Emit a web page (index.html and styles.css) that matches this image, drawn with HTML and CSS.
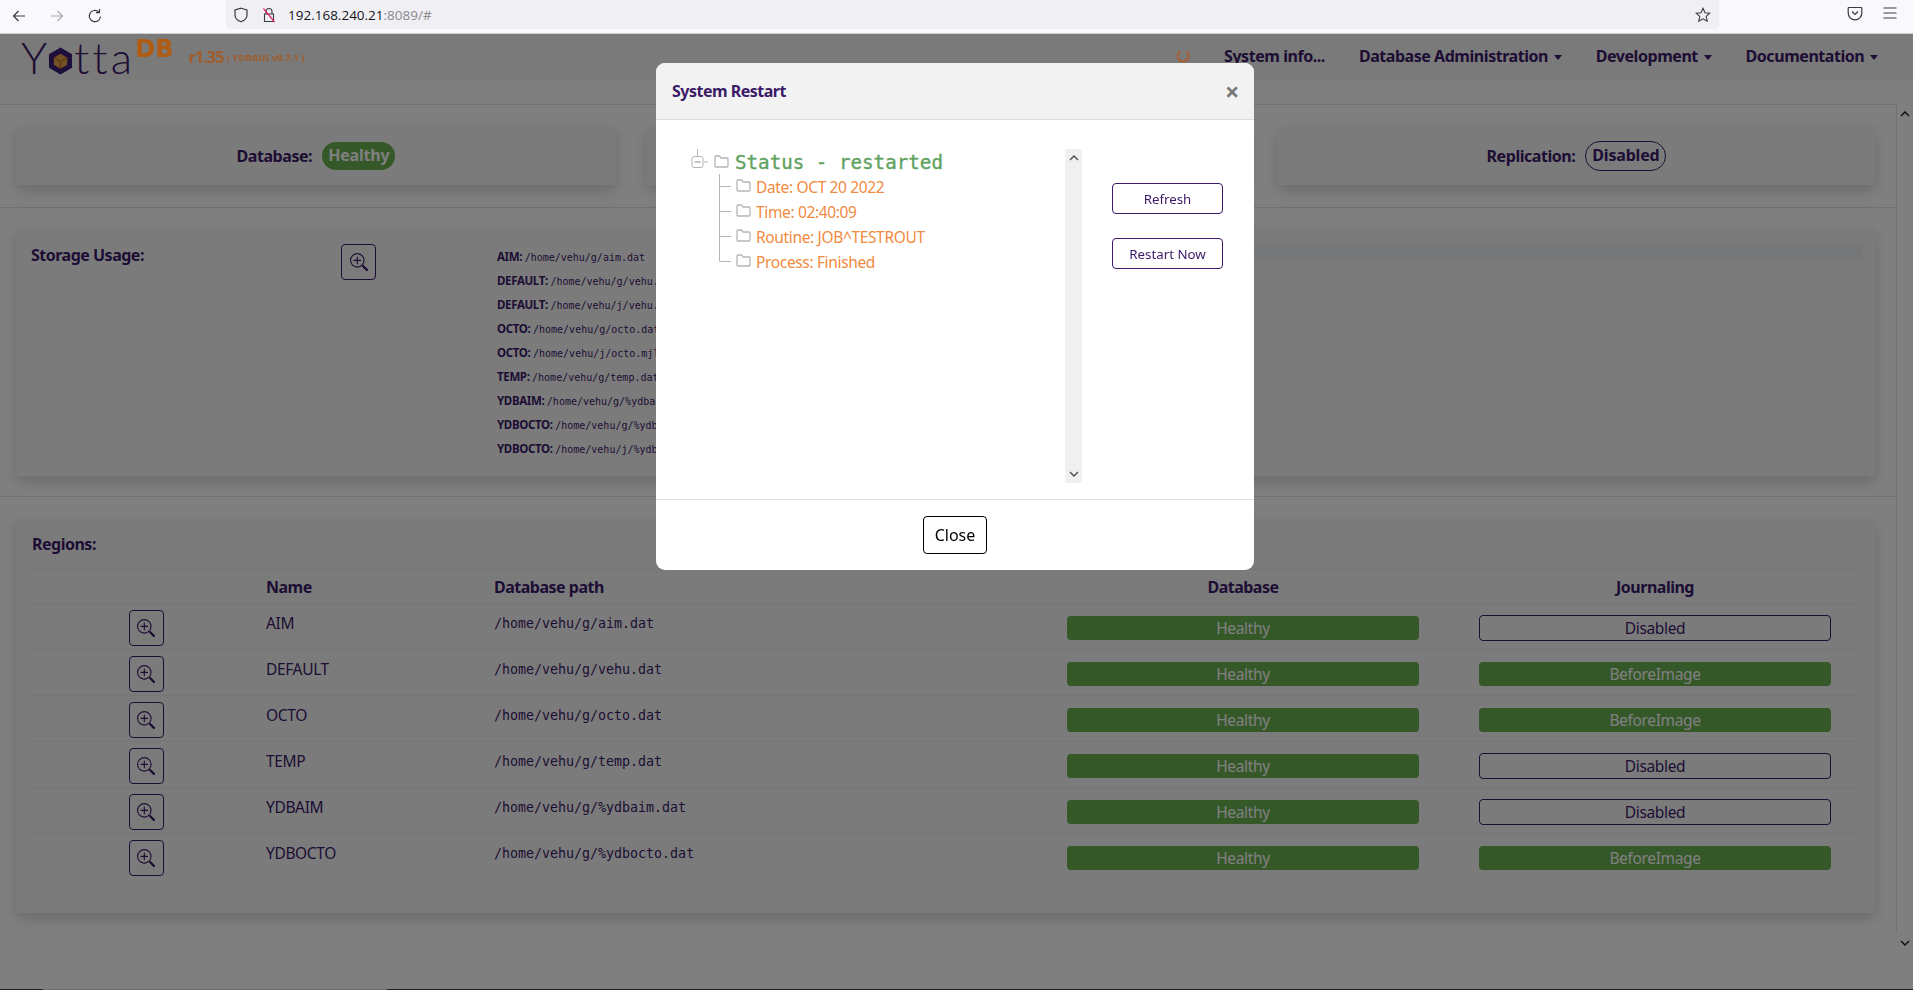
FILE: index.html
```html
<!DOCTYPE html>
<html lang="en">
<head>
<meta charset="utf-8">
<title>YottaDB GUI</title>
<link rel="stylesheet" href="styles.css">
</head>
<body>
<svg class="defs" width="0" height="0" aria-hidden="true">
  <symbol id="zoom" viewBox="0 0 16 16">
    <path fill-rule="evenodd" d="M6.5 12a5.5 5.5 0 1 0 0-11 5.5 5.5 0 0 0 0 11zM13 6.5a6.5 6.5 0 1 1-13 0 6.5 6.5 0 0 1 13 0z"/>
    <path d="M10.344 11.742c.03.04.062.078.098.115l3.85 3.85a1 1 0 0 0 1.415-1.414l-3.85-3.85a1.007 1.007 0 0 0-.115-.1 6.538 6.538 0 0 1-1.398 1.4z"/>
    <path fill-rule="evenodd" d="M6.5 3a.5.5 0 0 1 .5.5V6h2.5a.5.5 0 0 1 0 1H7v2.5a.5.5 0 0 1-1 0V7H3.5a.5.5 0 0 1 0-1H6V3.5a.5.5 0 0 1 .5-.5z"/>
  </symbol>
  <symbol id="folder" viewBox="0 0 15 13">
    <path d="M1 3V2a1 1 0 0 1 1-1h3.6l1.4 2h6a1 1 0 0 1 1 1v7a1 1 0 0 1-1 1H2a1 1 0 0 1-1-1V3z" fill="none" stroke="#b5b5b5" stroke-width="1.3"/>
  </symbol>
</svg>

<header class="chrome">
  <div class="nav-btns">
    <svg class="ci" viewBox="0 0 16 16"><path d="M14 8H2.5M7.5 3l-5 5 5 5" fill="none" stroke="#3a3a44" stroke-width="1.2"/></svg>
    <svg class="ci" viewBox="0 0 16 16"><path d="M2 8h11.5M8.5 3l5 5-5 5" fill="none" stroke="#a9a9ae" stroke-width="1.2"/></svg>
    <svg class="ci" viewBox="0 0 16 16"><path d="M13.5 8.5A5.6 5.6 0 1 1 11.6 3.8M12.5 1v3.6H9" fill="none" stroke="#3a3a44" stroke-width="1.2"/></svg>
  </div>
  <div class="urlbar">
    <svg class="ci shield" viewBox="0 0 16 16"><path d="M8 1.2 14 3v5c0 3.4-2.6 5.6-6 6.8C4.600 13.600 2 11.400 2 8V3z" fill="none" stroke="#3a3a44" stroke-width="1.2"/></svg>
    <svg class="ci lock" viewBox="0 0 16 16"><path d="M5 7V4.500a3 3 0 0 1 6 0V7M3.500 7h9v7.500h-9z" fill="none" stroke="#3a3a44" stroke-width="1.1"/><path d="M2.500 1.500 13.500 15" stroke="#e0245e" stroke-width="1.2"/></svg>
    <span class="url">192.168.240.21<span class="url-dim">:8089/#</span></span>
    <svg class="ci star" viewBox="0 0 16 16"><path d="m8 1.300 2 4.400 4.800.5-3.600 3.200 1 4.800L8 11.800l-4.200 2.400 1-4.800L1.200 6.200 6 5.700z" fill="none" stroke="#3a3a44" stroke-width="1.1"/></svg>
  </div>
  <div class="chrome-right">
    <svg class="ci" viewBox="0 0 16 16"><path d="M2 2.500h12a.8.8 0 0 1 .8.800V8a6.800 6.800 0 0 1-13.600 0V3.300A.8.8 0 0 1 2 2.500z" fill="none" stroke="#3a3a44" stroke-width="1.200"/><path d="m5 6.500 3 3 3-3" fill="none" stroke="#3a3a44" stroke-width="1.200"/></svg>
    <svg class="ci" viewBox="0 0 16 16"><path d="M1.500 3h13M1.500 8h13M1.500 13h13" stroke="#3a3a44" stroke-width="1.200"/></svg>
  </div>
</header>

<nav class="navbar">
  <div class="brand">
    <span class="logo-word">Y</span>
    <svg class="logo-hex" viewBox="0 0 26 28"><path d="M13 0 25 7v14l-12 7-12-7V7z" fill="#3a1f78"/><path d="M13 6.500 20 10.500v7.500L13 22l-7-4v-7.500z" fill="#e8a04a"/><path d="M6 10.500 13 14.500l7-4M13 14.500V22" fill="none" stroke="#a8601a" stroke-width="1"/></svg>
    <span class="logo-word tta">tta</span>
    <span class="logo-db">DB</span>
    <span class="ver">r1.35</span>
    <span class="ver-sub">( YDBGUI v0.7.1 )</span>
  </div>
  <div class="menu">
    <svg class="spin" viewBox="0 0 14 16"><path d="M3 2.500A6 6 0 1 0 10 2.500" fill="none" stroke="#b0592a" stroke-width="1.800"/></svg>
    <a class="menu-item">System info...</a>
    <a class="menu-item">Database Administration <i class="caret"></i></a>
    <a class="menu-item">Development <i class="caret"></i></a>
    <a class="menu-item">Documentation <i class="caret"></i></a>
  </div>
</nav>
<div class="strip"></div>

<div class="content">
  <main class="sections">
    <section class="sec sec-status">
      <div class="card status-card"><b>Database:</b><span class="pill pill-ok">Healthy</span></div>
      <div class="card status-card"></div>
      <div class="card status-card"><b>Replication:</b><span class="pill pill-off">Disabled</span></div>
    </section>
    <section class="sec sec-storage">
      <div class="card storage">
        <div class="st-label">Storage Usage:</div>
        <div class="st-btn"><button class="zbtn"><svg class="zi"><use href="#zoom"/></svg></button></div>
        <ul class="files">
          <li><b>AIM:</b> <code>/home/vehu/g/aim.dat</code></li>
          <li><b>DEFAULT:</b> <code>/home/vehu/g/vehu.dat</code></li>
          <li><b>DEFAULT:</b> <code>/home/vehu/j/vehu.mjl</code></li>
          <li><b>OCTO:</b> <code>/home/vehu/g/octo.dat</code></li>
          <li><b>OCTO:</b> <code>/home/vehu/j/octo.mjl</code></li>
          <li><b>TEMP:</b> <code>/home/vehu/g/temp.dat</code></li>
          <li><b>YDBAIM:</b> <code>/home/vehu/g/%ydbaim.dat</code></li>
          <li><b>YDBOCTO:</b> <code>/home/vehu/g/%ydbocto.dat</code></li>
          <li><b>YDBOCTO:</b> <code>/home/vehu/j/%ydbocto.mjl</code></li>
        </ul>
        <div class="track"></div>
      </div>
    </section>
    <section class="sec sec-regions">
      <div class="card regions">
        <div class="reg-title">Regions:</div>
        <div class="rtable">
          <div class="rrow rhead"><span></span><span class="nm">Name</span><span>Database path</span><span class="ctr">Database</span><span class="ctr">Journaling</span></div>
          <div class="rrow"><span class="ctr"><button class="zbtn"><svg class="zi"><use href="#zoom"/></svg></button></span><span class="nm">AIM</span><code class="pth">/home/vehu/g/aim.dat</code><span class="ctr"><span class="bar ok">Healthy</span></span><span class="ctr"><span class="bar off">Disabled</span></span></div>
          <div class="rrow"><span class="ctr"><button class="zbtn"><svg class="zi"><use href="#zoom"/></svg></button></span><span class="nm">DEFAULT</span><code class="pth">/home/vehu/g/vehu.dat</code><span class="ctr"><span class="bar ok">Healthy</span></span><span class="ctr"><span class="bar ok">BeforeImage</span></span></div>
          <div class="rrow"><span class="ctr"><button class="zbtn"><svg class="zi"><use href="#zoom"/></svg></button></span><span class="nm">OCTO</span><code class="pth">/home/vehu/g/octo.dat</code><span class="ctr"><span class="bar ok">Healthy</span></span><span class="ctr"><span class="bar ok">BeforeImage</span></span></div>
          <div class="rrow"><span class="ctr"><button class="zbtn"><svg class="zi"><use href="#zoom"/></svg></button></span><span class="nm">TEMP</span><code class="pth">/home/vehu/g/temp.dat</code><span class="ctr"><span class="bar ok">Healthy</span></span><span class="ctr"><span class="bar off">Disabled</span></span></div>
          <div class="rrow"><span class="ctr"><button class="zbtn"><svg class="zi"><use href="#zoom"/></svg></button></span><span class="nm">YDBAIM</span><code class="pth">/home/vehu/g/%ydbaim.dat</code><span class="ctr"><span class="bar ok">Healthy</span></span><span class="ctr"><span class="bar off">Disabled</span></span></div>
          <div class="rrow"><span class="ctr"><button class="zbtn"><svg class="zi"><use href="#zoom"/></svg></button></span><span class="nm">YDBOCTO</span><code class="pth">/home/vehu/g/%ydbocto.dat</code><span class="ctr"><span class="bar ok">Healthy</span></span><span class="ctr"><span class="bar ok">BeforeImage</span></span></div>
        </div>
      </div>
    </section>
  </main>
  <div class="vscroll">
    <svg class="chev" viewBox="0 0 10 6"><path d="m1 5 4-4 4 4" fill="none" stroke="#222" stroke-width="1.500"/></svg>
    <svg class="chev" viewBox="0 0 10 6"><path d="m1 1 4 4 4-4" fill="none" stroke="#222" stroke-width="1.500"/></svg>
  </div>
</div>
<div class="spacer"></div>
<div class="baseline"><span class="thumb"></span></div>

<div class="backdrop"></div>

<div class="modal">
  <div class="m-head"><span class="m-title">System Restart</span><span class="m-x">×</span></div>
  <div class="m-body">
    <div class="tree">
      <div class="t-root">
        <svg class="t-rooticon" viewBox="0 0 43 25"><path d="M6.500 0v7M13 13h4" stroke="#b5b5b5" fill="none"/><rect x="1" y="7.500" width="11" height="11" rx="2" fill="none" stroke="#b5b5b5"/><path d="M3.500 13h6" stroke="#888"/><use href="#folder" x="23" y="6" width="15" height="13"/></svg>
        <span class="t-status">Status - restarted</span>
      </div>
      <div class="t-child"><svg class="t-icon" viewBox="0 0 35 25"><path d="M.5 0v25M.5 12.500H12" stroke="#b5b5b5" fill="none"/><use href="#folder" x="17" y="5" width="15" height="13"/></svg><span>Date: OCT 20 2022</span></div>
      <div class="t-child"><svg class="t-icon" viewBox="0 0 35 25"><path d="M.5 0v25M.5 12.500H12" stroke="#b5b5b5" fill="none"/><use href="#folder" x="17" y="5" width="15" height="13"/></svg><span>Time: 02:40:09</span></div>
      <div class="t-child"><svg class="t-icon" viewBox="0 0 35 25"><path d="M.5 0v25M.5 12.500H12" stroke="#b5b5b5" fill="none"/><use href="#folder" x="17" y="5" width="15" height="13"/></svg><span>Routine: JOB^TESTROUT</span></div>
      <div class="t-child"><svg class="t-icon" viewBox="0 0 35 25"><path d="M.5 0v12.500H12" stroke="#b5b5b5" fill="none"/><use href="#folder" x="17" y="5" width="15" height="13"/></svg><span>Process: Finished</span></div>
    </div>
    <div class="m-track">
      <svg class="chev" viewBox="0 0 10 6"><path d="m1 5 4-4 4 4" fill="none" stroke="#555" stroke-width="1.500"/></svg>
      <svg class="chev" viewBox="0 0 10 6"><path d="m1 1 4 4 4-4" fill="none" stroke="#555" stroke-width="1.500"/></svg>
    </div>
    <div class="m-actions">
      <button class="act">Refresh</button>
      <button class="act">Restart Now</button>
    </div>
  </div>
  <div class="m-foot"><button class="close">Close</button></div>
</div>
</body>
</html>
```

FILE: styles.css
```css
* { box-sizing: border-box; }
html, body { height: 100%; }
body {
  margin: 0;
  height: 990px;
  overflow: hidden;
  display: flex;
  flex-direction: column;
  background: #fff;
  color: #3b1a68;
  font-family: "Noto Sans", "Open Sans", sans-serif;
  font-size: 15.5px;
  letter-spacing: -.35px;
}
.defs { position: absolute; }
code { font-family: "DejaVu Sans Mono", monospace; letter-spacing: 0; }
b { font-weight: 700; letter-spacing: -.45px; font-size: 16px; }

/* browser chrome */
.chrome {
  flex: none;
  position: relative;
  z-index: 20;
  height: 34px;
  display: flex;
  background: #f9f9fb;
  border-bottom: 1px solid #cfcfd3;
  letter-spacing: 0;
}
.ci { width: 16px; height: 16px; flex: none; display: block; }
.nav-btns { width: 226px; display: flex; gap: 22px; padding: 8px 0 0 11px; }
.urlbar {
  width: 1493px;
  height: 29px;
  background: #f0f0f4;
  border-radius: 0 0 4px 4px;
  display: flex;
  align-items: center;
  padding: 0 8px 0 7px;
  color: #15141a;
}
.lock { margin-left: 12px; }
.url { margin-left: 11px; font-family: "Open Sans", sans-serif; font-size: 13.5px; flex: 1; }
.url-dim { color: #8a8a90; }
.chrome-right { flex: 1; display: flex; gap: 19px; padding: 5px 0 0 128px; }

/* navbar */
.navbar {
  flex: none;
  height: 46px;
  background: #f4f4f4;
  display: flex;
  justify-content: space-between;
  align-items: center;
}
.brand { display: flex; align-items: center; padding-left: 21px; height: 46px; letter-spacing: 0; }
.logo-word { font-family: Lato, sans-serif; font-weight: 300; font-size: 44px; line-height: 44px; color: #3b1a68; }
.tta { margin-left: 1px; letter-spacing: 3.2px; }
.logo-hex { width: 25px; height: 28px; margin: 8px 0 0 1px; }
.logo-db, .ver, .ver-sub, .spin { position: relative; z-index: 11; }
.logo-db { font-family: "DejaVu Sans", sans-serif; font-weight: 700; font-size: 24px; line-height: 26px; color: #b05c12; margin: -16px 0 0 0; }
.ver { font-weight: 700; font-size: 16px; color: #a05c2a; margin-left: 15px; letter-spacing: -.8px; }
.ver-sub { font-weight: 700; font-size: 9.5px; color: #a05c2a; margin-left: 3px; }
.menu { display: flex; align-items: center; padding: 0 35px 2px 0; color: #3b1a68; }
.menu-item { font-weight: 700; font-size: 16px; letter-spacing: -.45px; white-space: nowrap; margin-left: 34px; }
.caret { display: inline-block; width: 0; height: 0; border: 4px solid transparent; border-top: 5px solid #3b1a68; border-bottom: 0; margin-left: 2px; vertical-align: 2px; }
.spin { width: 13px; height: 15px; }
.strip { flex: none; height: 24px; }

/* content */
.content { flex: none; height: 851px; display: flex; }
.sections { width: 1897px; border-right: 1px solid #e6e6e6; height: 829px; }
.sec { border-top: 1px solid #e2e2e2; padding-left: 16px; padding-right: 21px; }
.card { background: #f7f7f7; box-shadow: 0 6px 14px rgba(0, 0, 0, .16); border-radius: 4px; }
.vscroll { flex: 1; display: flex; flex-direction: column; justify-content: space-between; align-items: center; padding: 7px 0 9px; }
.chev { width: 10px; height: 6px; display: block; }

.sec-status { height: 103px; padding-top: 21px; display: grid; grid-template-columns: 600px 1fr 597px; column-gap: 31px; align-items: start; }
.status-card { height: 59px; display: flex; align-items: center; justify-content: center; gap: 10px; }
.pill { border-radius: 15px; padding: 0 6px; height: 28px; line-height: 27px; font-weight: 700; font-size: 16px; letter-spacing: -.2px; }
.pill-ok { background: #6bb152; color: #fff; }
.pill-off { border: 1px solid #3b1a68; color: #3b1a68; height: 30px; }

.sec-storage { height: 289px; padding-top: 20px; }
.storage { height: 248px; display: flex; padding: 16px 12px 0 15px; }
.st-label { width: 310px; font-weight: 700; font-size: 16px; letter-spacing: -.5px; line-height: 22px; }
.st-btn { width: 156px; }
.zbtn { width: 35px; height: 36px; padding: 0; background: transparent; border: 1px solid #3b1a68; border-radius: 4px; display: inline-flex; align-items: center; justify-content: center; color: #3b1a68; }
.zi { width: 18px; height: 18px; fill: currentColor; }
.files { list-style: none; margin: 1px 0 0; padding: 0; width: 303px; }
.files li { height: 24px; line-height: 24px; white-space: nowrap; font-size: 11px; }
.files b { font-size: 11.5px; letter-spacing: -.35px; }
.files code { font-size: 10px; }
.track { flex: 1; height: 17px; background: #eceef0; border-radius: 2px; }

.sec-regions { height: 437px; padding-top: 22px; }
.regions { height: 394px; padding: 0 15px 0 16px; }
.reg-title { height: 50px; padding-top: 14px; font-weight: 700; font-size: 16px; letter-spacing: -.5px; line-height: 22px; }
.rtable { border-top: 1px solid #ececec; }
.rrow { display: grid; grid-template-columns: 228px 234px 542px 414px 410px; height: 46px; border-top: 1px solid #ececec; padding-top: 6px; align-items: start; }
.rrow:last-child { height: 48px; }
.rhead { height: 33px; border-top: 0; padding-top: 4px; font-weight: 700; font-size: 16px; letter-spacing: -.5px; line-height: 26px; }
.nm { padding-left: 6px; }
.rrow:not(.rhead) .nm { padding-top: 1px; line-height: 24px; }
.pth { font-size: 13.3px; padding-top: 2px; line-height: 24px; }
.ctr { display: flex; justify-content: center; }
.bar { width: 352px; height: 24px; line-height: 24px; text-align: center; border-radius: 4px; margin-top: 6px; }
.ok { background: #6bb152; color: #fff; }
.off { height: 26px; line-height: 24px; margin-top: 5px; border: 1px solid #3b1a68; color: #3b1a68; }

.spacer { flex: 1; }
.baseline { flex: none; height: 1px; background: #444; padding-left: 43px; display: flex; }
.thumb { width: 344px; background: #ddd; }

/* modal layer */
.backdrop { position: fixed; left: 0; top: 34px; right: 0; bottom: 0; background: rgba(0, 0, 0, .5); z-index: 10; }
.modal {
  position: fixed;
  z-index: 15;
  left: 656px;
  top: 63px;
  width: 598px;
  height: 507px;
  background: #fff;
  border-radius: 9px;
  display: flex;
  flex-direction: column;
  overflow: hidden;
}
.m-head { flex: none; height: 57px; background: #f2f2f2; border-bottom: 1px solid #dedede; display: flex; justify-content: space-between; align-items: center; padding: 0 15px 0 16px; }
.m-title { font-weight: 700; font-size: 16px; letter-spacing: -.5px; color: #3b1a68; }
.m-x { font-weight: 700; font-size: 25px; color: #777; line-height: 1; }
.m-body { flex: none; height: 380px; display: flex; padding: 29px 0 0 35px; border-bottom: 1px solid #dedede; }
.tree { width: 374px; }
.t-root { height: 25px; display: flex; align-items: center; }
.t-rooticon { width: 43px; height: 25px; flex: none; }
.t-status { font-family: "DejaVu Sans Mono", monospace; font-size: 19.2px; letter-spacing: 0; color: #60a260; -webkit-text-stroke: .35px #60a260; line-height: 25px; margin: 2px 0 0 1px; }
.t-child { height: 25px; display: flex; align-items: center; margin-left: 28px; color: #f28a40; white-space: nowrap; }
.t-icon { width: 35px; height: 25px; flex: none; margin-right: 2px; }
.m-track { width: 17px; height: 334px; background: #f0f0f0; display: flex; flex-direction: column; justify-content: space-between; align-items: center; padding: 6px 0; }
.m-actions { display: flex; flex-direction: column; gap: 24px; padding: 34px 0 0 30px; }
.act { width: 111px; height: 31px; background: #fff; border: 1px solid #3b1a68; border-radius: 4px; color: #3b1a68; font-family: inherit; font-size: 13.3px; padding: 0; }
.m-foot { flex: 1; display: flex; justify-content: center; padding-top: 16px; }
.close { width: 64px; height: 38px; background: #fff; border: 1px solid #000; border-radius: 4px; color: #000; font-family: inherit; font-size: 16px; letter-spacing: 0; padding: 0; }
```
